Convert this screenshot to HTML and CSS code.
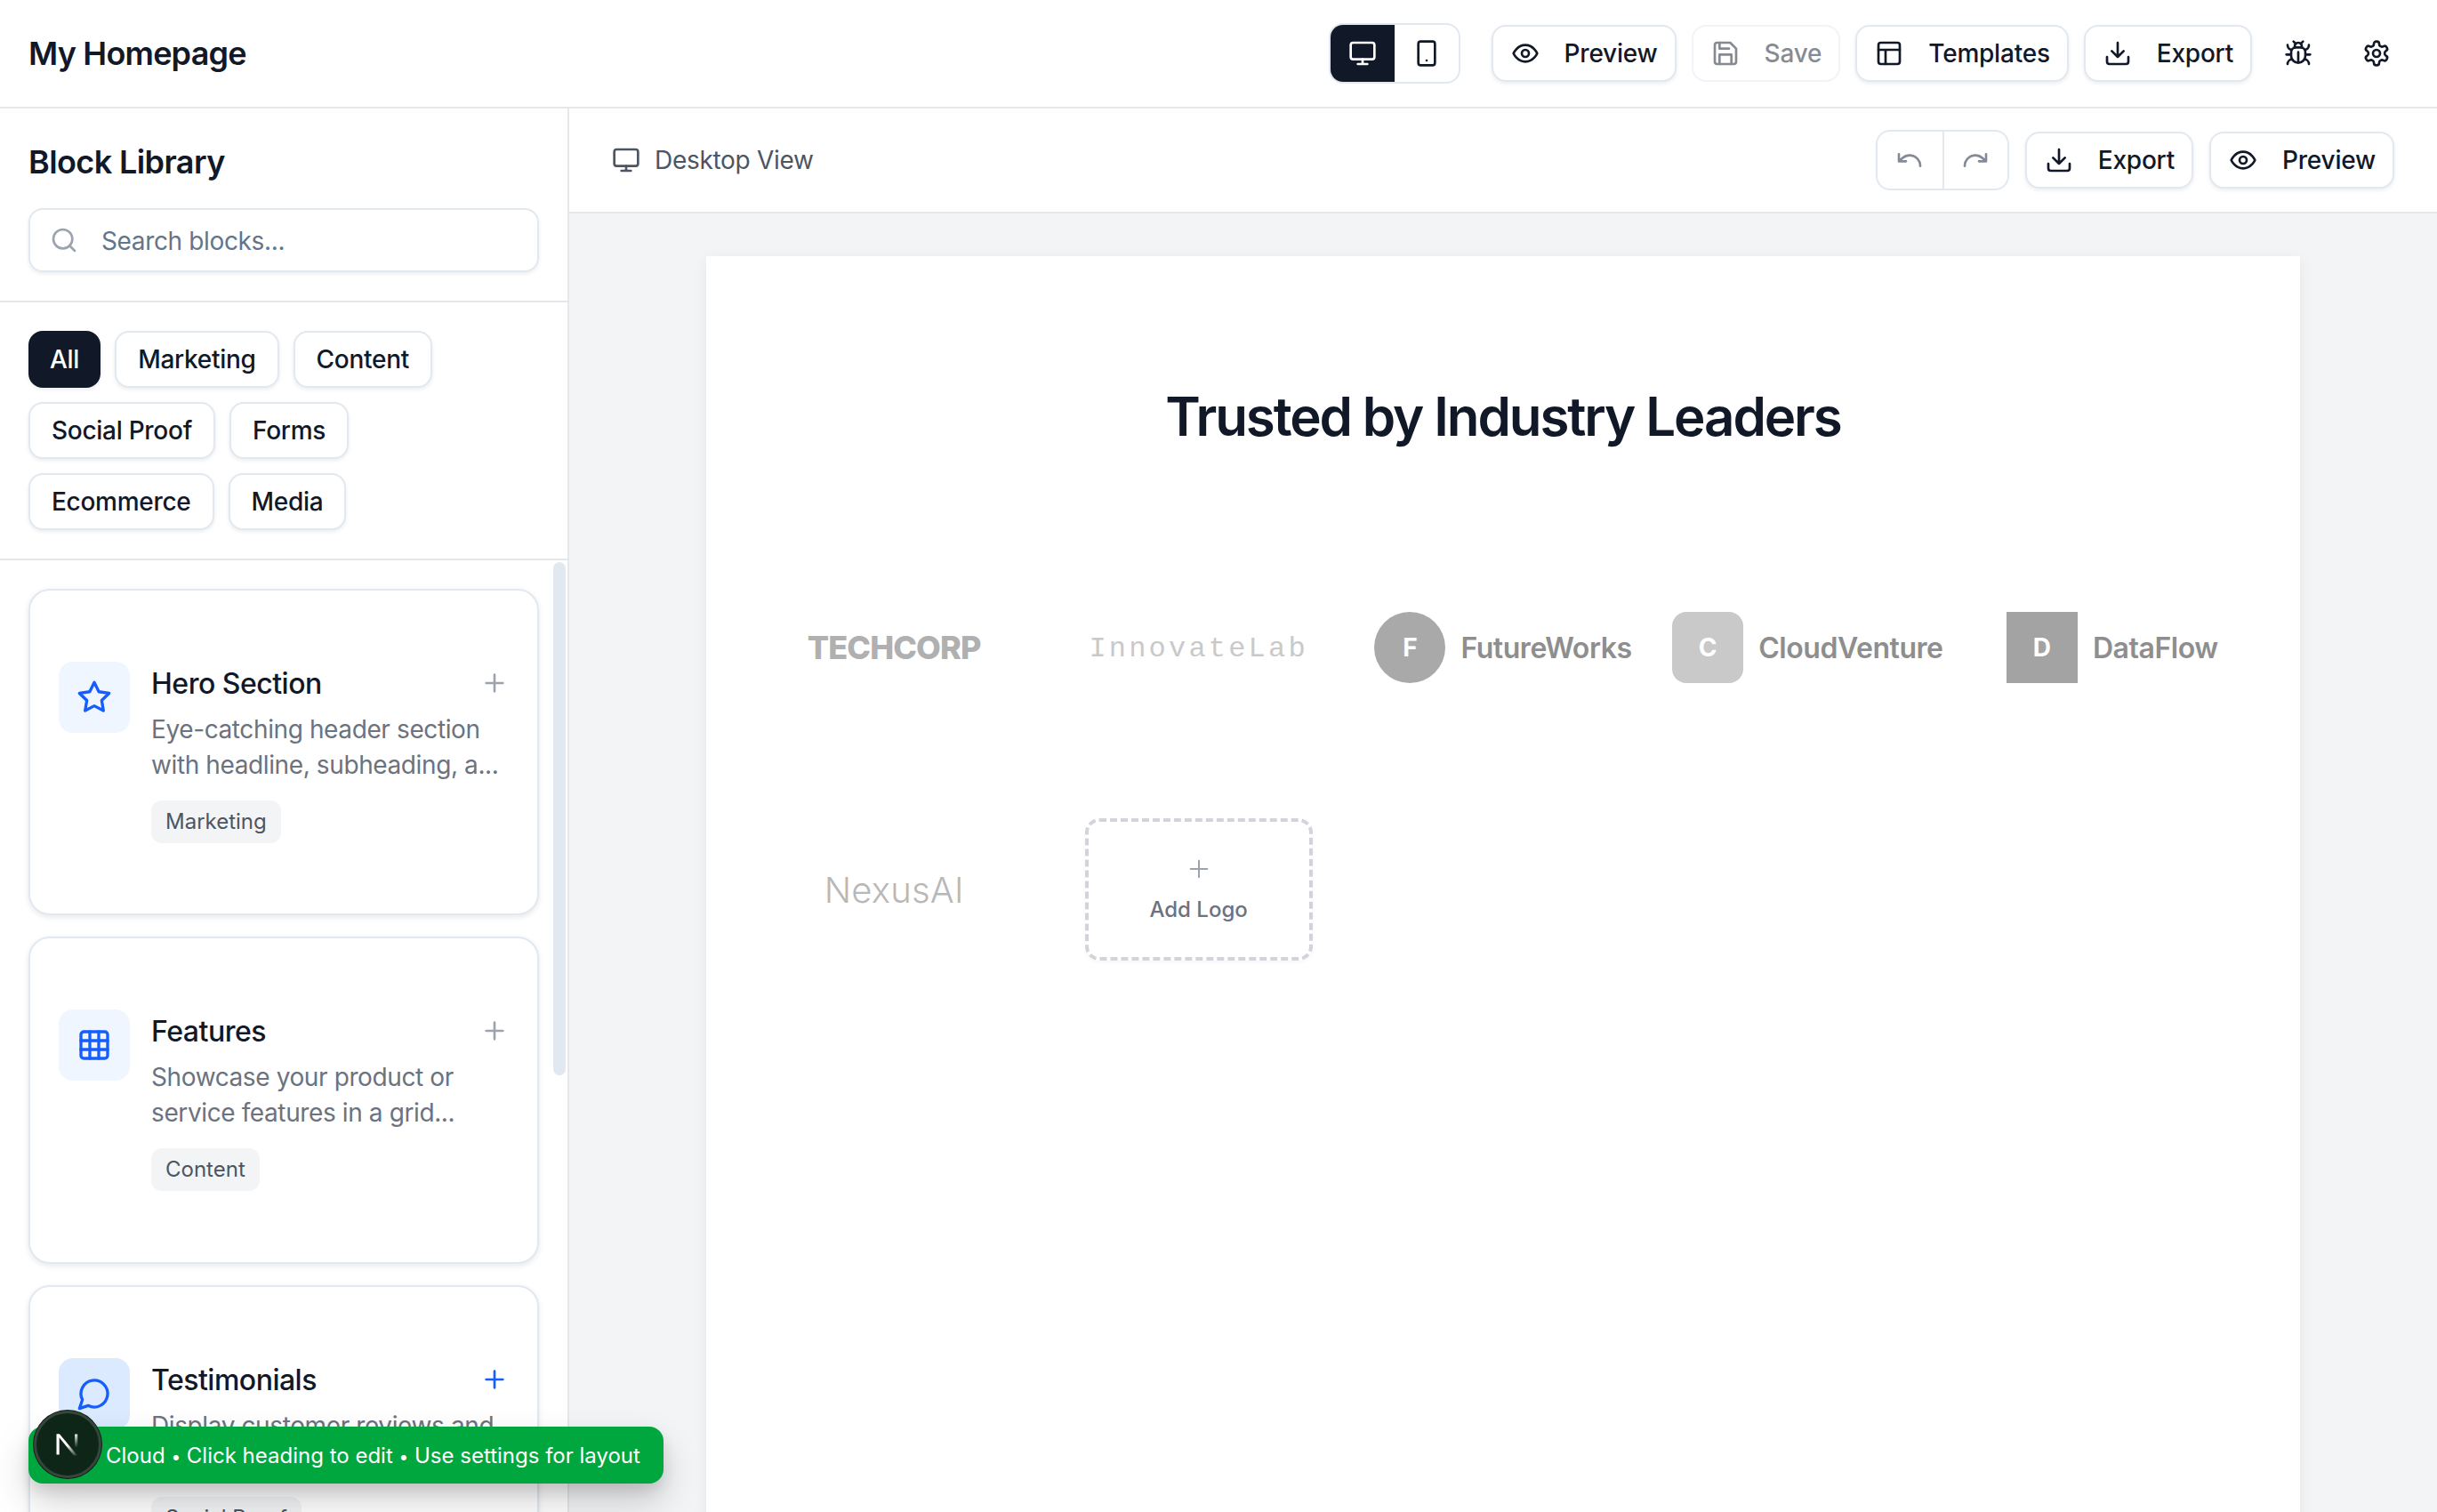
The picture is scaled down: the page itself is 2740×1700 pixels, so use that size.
FILE: index.html
```html
<!DOCTYPE html>
<html lang="en">
<head>
<meta charset="utf-8">
<title>My Homepage</title>
<link rel="stylesheet" href="styles.css">
</head>
<body>
<svg class="defs" aria-hidden="true">
  <symbol id="i-monitor" viewBox="0 0 24 24"><rect x="2" y="3" width="20" height="14" rx="2"/><path d="M8 21h8M12 17v4"/></symbol>
  <symbol id="i-phone" viewBox="0 0 24 24"><rect x="5" y="2" width="14" height="20" rx="2"/><path d="M12 18h.01"/></symbol>
  <symbol id="i-eye" viewBox="0 0 24 24"><path d="M2 12s3-7 10-7 10 7 10 7-3 7-10 7-10-7-10-7Z"/><circle cx="12" cy="12" r="3"/></symbol>
  <symbol id="i-save" viewBox="0 0 24 24"><path d="M19 21H5a2 2 0 0 1-2-2V5a2 2 0 0 1 2-2h11l5 5v11a2 2 0 0 1-2 2z"/><path d="M17 21v-8H7v8M7 3v5h8"/></symbol>
  <symbol id="i-layout" viewBox="0 0 24 24"><rect x="3" y="3" width="18" height="18" rx="2"/><path d="M3 9h18M9 21V9"/></symbol>
  <symbol id="i-download" viewBox="0 0 24 24"><path d="M21 15v4a2 2 0 0 1-2 2H5a2 2 0 0 1-2-2v-4M7 10l5 5 5-5M12 15V3"/></symbol>
  <symbol id="i-bug" viewBox="0 0 24 24"><path d="m8 2 1.88 1.88M14.12 3.88 16 2M9 7.13v-1a3.003 3.003 0 1 1 6 0v1"/><path d="M12 20c-3.3 0-6-2.7-6-6v-3a4 4 0 0 1 4-4h4a4 4 0 0 1 4 4v3c0 3.3-2.7 6-6 6M12 20v-9M6.53 9C4.6 8.8 3 7.1 3 5M6 13H2M3 21c0-2.1 1.7-3.9 3.8-4M20.97 5c0 2.1-1.6 3.8-3.5 4M22 13h-4M17.2 17c2.1.1 3.8 1.9 3.8 4"/></symbol>
  <symbol id="i-gear" viewBox="0 0 24 24"><path d="M12.22 2h-.44a2 2 0 0 0-2 2v.18a2 2 0 0 1-1 1.73l-.43.25a2 2 0 0 1-2 0l-.15-.08a2 2 0 0 0-2.73.73l-.22.38a2 2 0 0 0 .73 2.73l.15.1a2 2 0 0 1 1 1.72v.51a2 2 0 0 1-1 1.74l-.15.09a2 2 0 0 0-.73 2.73l.22.38a2 2 0 0 0 2.73.73l.15-.08a2 2 0 0 1 2 0l.43.25a2 2 0 0 1 1 1.73V20a2 2 0 0 0 2 2h.44a2 2 0 0 0 2-2v-.18a2 2 0 0 1 1-1.73l.43-.25a2 2 0 0 1 2 0l.15.08a2 2 0 0 0 2.73-.73l.22-.39a2 2 0 0 0-.73-2.73l-.15-.08a2 2 0 0 1-1-1.74v-.5a2 2 0 0 1 1-1.74l.15-.09a2 2 0 0 0 .73-2.73l-.22-.38a2 2 0 0 0-2.73-.73l-.15.08a2 2 0 0 1-2 0l-.43-.25a2 2 0 0 1-1-1.73V4a2 2 0 0 0-2-2z"/><circle cx="12" cy="12" r="3"/></symbol>
  <symbol id="i-undo" viewBox="0 0 24 24"><path d="M3 7v6h6M21 17a9 9 0 0 0-9-9 9 9 0 0 0-6 2.3L3 13"/></symbol>
  <symbol id="i-redo" viewBox="0 0 24 24"><path d="M21 7v6h-6M3 17a9 9 0 0 1 9-9 9 9 0 0 1 6 2.3l3 2.7"/></symbol>
  <symbol id="i-search" viewBox="0 0 24 24"><circle cx="11" cy="11" r="8"/><path d="m21 21-4.3-4.3"/></symbol>
  <symbol id="i-star" viewBox="0 0 24 24"><path d="M12 2l3.09 6.26L22 9.27l-5 4.87 1.18 6.88L12 17.77l-6.18 3.25L7 14.14 2 9.27l6.91-1.01L12 2z"/></symbol>
  <symbol id="i-grid" viewBox="0 0 24 24"><rect x="3" y="3" width="18" height="18" rx="2"/><path d="M3 9h18M3 15h18M9 3v18M15 3v18"/></symbol>
  <symbol id="i-chat" viewBox="0 0 24 24"><path d="M7.9 20A9 9 0 1 0 4 16.1L2 22Z"/></symbol>
  <symbol id="i-plus" viewBox="0 0 24 24"><path d="M5 12h14M12 5v14"/></symbol>
</svg>

<div class="app">
  <header class="topbar">
    <div class="doc-title">My Homepage</div>
    <div class="top-actions">
      <div class="segmented seg-device">
        <button class="seg-btn seg-active"><svg class="ic"><use href="#i-monitor"/></svg></button>
        <button class="seg-btn"><svg class="ic"><use href="#i-phone"/></svg></button>
      </div>
      <button class="btn"><svg class="ic"><use href="#i-eye"/></svg>Preview</button>
      <button class="btn btn-disabled"><svg class="ic"><use href="#i-save"/></svg>Save</button>
      <button class="btn"><svg class="ic"><use href="#i-layout"/></svg>Templates</button>
      <button class="btn"><svg class="ic"><use href="#i-download"/></svg>Export</button>
      <button class="icon-btn icon-bug"><svg class="ic"><use href="#i-bug"/></svg></button>
      <button class="icon-btn icon-gear"><svg class="ic"><use href="#i-gear"/></svg></button>
    </div>
  </header>

  <div class="workspace">
    <aside class="sidebar">
      <div class="lib-head">
        <h2 class="lib-title">Block Library</h2>
        <div class="search">
          <svg class="ic search-ic"><use href="#i-search"/></svg>
          <span class="search-ph">Search blocks...</span>
        </div>
      </div>
      <div class="chips">
        <button class="chip chip-active">All</button>
        <button class="chip">Marketing</button>
        <button class="chip">Content</button>
        <button class="chip">Social Proof</button>
        <button class="chip">Forms</button>
        <button class="chip">Ecommerce</button>
        <button class="chip">Media</button>
      </div>
      <div class="list-wrap">
        <div class="block-list">
          <article class="card">
            <div class="card-icon"><svg class="ic-lg"><use href="#i-star"/></svg></div>
            <div class="card-body">
              <div class="card-head"><h3 class="card-title">Hero Section</h3><svg class="ic card-plus"><use href="#i-plus"/></svg></div>
              <p class="card-desc">Eye-catching header section with headline, subheading, a...</p>
              <span class="tag">Marketing</span>
            </div>
          </article>
          <article class="card">
            <div class="card-icon"><svg class="ic-lg"><use href="#i-grid"/></svg></div>
            <div class="card-body">
              <div class="card-head"><h3 class="card-title">Features</h3><svg class="ic card-plus"><use href="#i-plus"/></svg></div>
              <p class="card-desc">Showcase your product or service features in a grid...</p>
              <span class="tag">Content</span>
            </div>
          </article>
          <article class="card card-hover">
            <div class="card-icon"><svg class="ic-lg"><use href="#i-chat"/></svg></div>
            <div class="card-body">
              <div class="card-head"><h3 class="card-title">Testimonials</h3><svg class="ic card-plus"><use href="#i-plus"/></svg></div>
              <p class="card-desc">Display customer reviews and testimonials...</p>
              <span class="tag">Social Proof</span>
            </div>
          </article>
        </div>
        <div class="scroll-thumb"></div>
      </div>
    </aside>

    <main class="main">
      <div class="toolbar">
        <div class="view-label"><svg class="ic"><use href="#i-monitor"/></svg>Desktop View</div>
        <div class="toolbar-actions">
          <div class="segmented seg-history">
            <button class="seg-btn"><svg class="ic"><use href="#i-undo"/></svg></button>
            <button class="seg-btn seg-split"><svg class="ic"><use href="#i-redo"/></svg></button>
          </div>
          <button class="btn"><svg class="ic"><use href="#i-download"/></svg>Export</button>
          <button class="btn"><svg class="ic"><use href="#i-eye"/></svg>Preview</button>
        </div>
      </div>
      <div class="canvas">
        <section class="page">
          <h1 class="page-title">Trusted by Industry Leaders</h1>
          <div class="logos">
            <div class="logo"><span class="logo-tech">TECHCORP</span></div>
            <div class="logo"><span class="logo-mono">InnovateLab</span></div>
            <div class="logo"><span class="mark mark-round">F</span><span class="logo-name">FutureWorks</span></div>
            <div class="logo"><span class="mark mark-soft">C</span><span class="logo-name">CloudVenture</span></div>
            <div class="logo"><span class="mark mark-square">D</span><span class="logo-name">DataFlow</span></div>
            <div class="logo"><span class="logo-light">NexusAI</span></div>
            <div class="logo"><div class="add-logo"><svg class="ic add-plus"><use href="#i-plus"/></svg><span class="add-text">Add Logo</span></div></div>
          </div>
        </section>
      </div>
    </main>
  </div>

  <div class="toast"><span>Cloud <span class="dot">•</span> Click heading to edit <span class="dot">•</span> Use settings for layout</span></div>
  <div class="next-badge">
    <svg class="next-n" viewBox="0 0 40 40" aria-hidden="true">
      <defs><linearGradient id="nfade" x1="0" y1="0" x2="1" y2="1"><stop offset="0.5" stop-color="#fff"/><stop offset="1" stop-color="#fff" stop-opacity="0.05"/></linearGradient>
      <linearGradient id="nfade2" x1="0" y1="0" x2="0" y2="1"><stop offset="0" stop-color="#fff" stop-opacity="0.9"/><stop offset="1" stop-color="#fff" stop-opacity="0"/></linearGradient></defs>
      <path d="M7.5 8.5h3.2v23H7.5z" fill="#fff"/>
      <path d="M7.5 8.5h3.6l20 24h-4z" fill="url(#nfade)"/>
      <path d="M28 8.5h3.2v15H28z" fill="url(#nfade2)"/>
    </svg>
  </div>
</div>
</body>
</html>
```

FILE: styles.css
```css
* { box-sizing: border-box; }
html, body { margin: 0; padding: 0; height: 100%; }
body { font-family: Inter, "Liberation Sans", sans-serif; color: #111827; background: #fff; overflow: hidden; }
h1, h2, h3, p { margin: 0; }
button { font: inherit; color: inherit; background: none; border: 0; padding: 0; }
.defs { position: absolute; width: 0; height: 0; }

.ic, .ic-lg { fill: none; stroke: currentColor; stroke-width: 2; stroke-linecap: round; stroke-linejoin: round; flex: none; display: block; }
.ic { width: 32px; height: 32px; }
.ic-lg { width: 40px; height: 40px; }

.app { position: relative; width: 2740px; height: 1700px; display: flex; flex-direction: column; overflow: hidden; }

.topbar { height: 122px; flex: none; display: flex; align-items: center; justify-content: space-between; padding: 0 36px 0 32px; border-bottom: 2px solid #e5e7eb; background: #fff; }
.doc-title { font-size: 36px; font-weight: 600; line-height: 48px; letter-spacing: -0.8px; }
.top-actions { display: flex; align-items: center; gap: 17px; }
.seg-device { margin-right: 18px; }

.segmented { display: flex; height: 68px; width: 148px; border: 2px solid #e2e8f0; border-radius: 16px; overflow: hidden; background: #fff; }
.seg-btn { width: 72px; height: 64px; display: flex; align-items: center; justify-content: center; }
.seg-active { background: #111827; color: #fff; }
.seg-history { color: #858b96; width: 150px; }
.seg-history .seg-btn { width: 73px; }
.seg-split { border-left: 2px solid #e5e7eb; }

.btn { height: 64px; display: flex; align-items: center; gap: 28px; padding: 0 19px 0 20px; border: 2px solid #e2e8f0; border-radius: 16px; background: #fff; font-size: 28px; font-weight: 500; letter-spacing: -0.22px; box-shadow: 0 2px 4px rgba(15,23,42,.08); white-space: nowrap; }
.btn-disabled { opacity: .5; box-shadow: none; }
.icon-btn { width: 64px; height: 64px; display: flex; align-items: center; justify-content: center; }
.icon-bug { margin-left: 3px; }
.icon-gear { margin-left: 7px; }

.workspace { flex: 1; min-height: 0; display: flex; }

.sidebar { width: 640px; flex: none; display: flex; flex-direction: column; border-right: 2px solid #e5e7eb; background: #fff; min-height: 0; }
.lib-head { padding: 32px; border-bottom: 2px solid #e5e7eb; }
.lib-title { font-size: 36px; font-weight: 600; line-height: 56px; margin-bottom: 24px; letter-spacing: -0.6px; }
.search { height: 72px; display: flex; align-items: center; gap: 26px; padding: 0 22px; border: 2px solid #e2e8f0; border-radius: 16px; box-shadow: 0 2px 4px rgba(15,23,42,.08); }
.search-ic { color: #9ca3af; }
.search-ph { font-size: 28px; color: #64748b; letter-spacing: -0.36px; padding-top: 1px; }

.chips { display: flex; flex-wrap: wrap; gap: 16px; padding: 32px; border-bottom: 2px solid #e5e7eb; }
.chip { height: 64px; padding: 0 24px; border: 2px solid #e2e8f0; border-radius: 16px; background: #fff; font-size: 28px; font-weight: 500; letter-spacing: -0.28px; box-shadow: 0 2px 4px rgba(15,23,42,.08); }
.chip-active { padding: 0 22px; background: #111827; border-color: #111827; color: #fff; }

.list-wrap { position: relative; flex: 1; min-height: 0; }
.block-list { height: 100%; overflow: hidden; padding: 32px; display: flex; flex-direction: column; gap: 24px; }
.scroll-thumb { position: absolute; left: 622px; top: 2px; width: 14px; height: 577px; border-radius: 7px; background: #e2e8f0; }

.card { flex: none; height: 367.4px; display: flex; align-items: flex-start; gap: 24px; padding: 80px 32px 0; border: 2px solid #e2e8f0; border-radius: 24px; background: #fff; box-shadow: 0 2px 6px rgba(15,23,42,.1); }
.card-icon { width: 80px; height: 80px; flex: none; display: flex; align-items: center; justify-content: center; border-radius: 16px; background: #eff6ff; color: #155dfc; }
.card-body { flex: 1; min-width: 0; }
.card-head { display: flex; align-items: center; justify-content: space-between; height: 48px; }
.card-title { font-size: 32px; font-weight: 500; line-height: 48px; padding-top: 2px; letter-spacing: -0.5px; }
.card-plus { color: #9ca3af; }
.card-desc { margin-top: 8px; font-size: 28px; line-height: 40px; color: #6b7280; letter-spacing: -0.39px; }
.tag { display: inline-block; margin-top: 20px; height: 48px; padding: 8px 16px; border-radius: 12px; background: #f3f4f6; font-size: 24px; line-height: 32px; color: #4b5563; }
.card-hover .card-icon { background: #dbeafe; }
.card-hover .card-plus { color: #155dfc; }

.main { flex: 1; min-width: 0; display: flex; flex-direction: column; background: #f3f4f6; }
.toolbar { height: 118px; flex: none; display: flex; align-items: center; justify-content: space-between; padding: 0 48px; background: #fff; border-bottom: 2px solid #e5e7eb; }
.view-label { display: flex; align-items: center; gap: 16px; font-size: 28px; color: #4b5563; letter-spacing: -0.3px; }
.toolbar-actions { display: flex; align-items: center; gap: 18px; }

.canvas { flex: 1; min-height: 0; overflow: hidden; padding: 48px 154px 0; }
.page { min-height: 1800px; background: #fff; padding-top: 144px; box-shadow: 0 4px 16px rgba(0,0,0,.06); }
.page-title { font-size: 60px; line-height: 72px; font-weight: 600; text-align: center; letter-spacing: -2.1px; margin-bottom: 144px; color: #111827; }

.logos { display: grid; grid-template-columns: repeat(5, 1fr); grid-auto-rows: 160px; gap: 112px 64px; padding: 0 72px; }
.logo { display: flex; align-items: center; justify-content: center; gap: 17px; white-space: nowrap; min-width: 0; }
.logo-tech { font-size: 36px; font-weight: 800; letter-spacing: -0.9px; color: #b0b0b0; }
.logo-mono { font-family: "Liberation Mono", monospace; font-size: 32px; letter-spacing: 3.2px; color: #c9c9c9; padding-top: 2px; }
.logo-light { font-size: 40px; font-weight: 300; letter-spacing: 0.2px; color: #b8b8b8; }
.logo-name { font-size: 32px; font-weight: 600; color: #8e8e8e; letter-spacing: -0.45px; }
.mark { width: 80px; height: 80px; flex: none; display: flex; align-items: center; justify-content: center; color: #fff; font-size: 28px; font-weight: 700; letter-spacing: 0; }
.mark-round { border-radius: 50%; background: #a9a9a9; }
.mark-soft { border-radius: 16px; background: #c9c9c9; }
.mark-square { background: #a3a3a3; }

.add-logo { width: 256px; height: 160px; display: flex; flex-direction: column; align-items: center; justify-content: center; gap: 14px; border: 4px dashed #d1d5db; border-radius: 16px; box-shadow: 0 2px 4px rgba(0,0,0,.04); }
.add-plus { color: #9ca3af; stroke-width: 1.5; }
.add-text { font-size: 24px; font-weight: 500; color: #6b7280; line-height: 32px; }

.toast { position: absolute; left: 32px; bottom: 32px; width: 714px; height: 64px; display: flex; align-items: center; padding: 0 0 0 87px; border-radius: 16px; background: #00a63e; color: #fff; font-size: 24px; white-space: nowrap; box-shadow: 0 20px 40px rgba(0,0,0,.18), 0 8px 16px rgba(0,0,0,.1); }
.dot { font-size: 19px; }
.next-badge { position: absolute; left: 38px; top: 1586px; width: 76px; height: 76px; border-radius: 50%; background: #0e2617; border: 3px solid #36463c; box-shadow: 0 0 0 1px #141a16; display: flex; align-items: center; justify-content: center; }
.next-n { width: 40px; height: 40px; display: block; }
```
